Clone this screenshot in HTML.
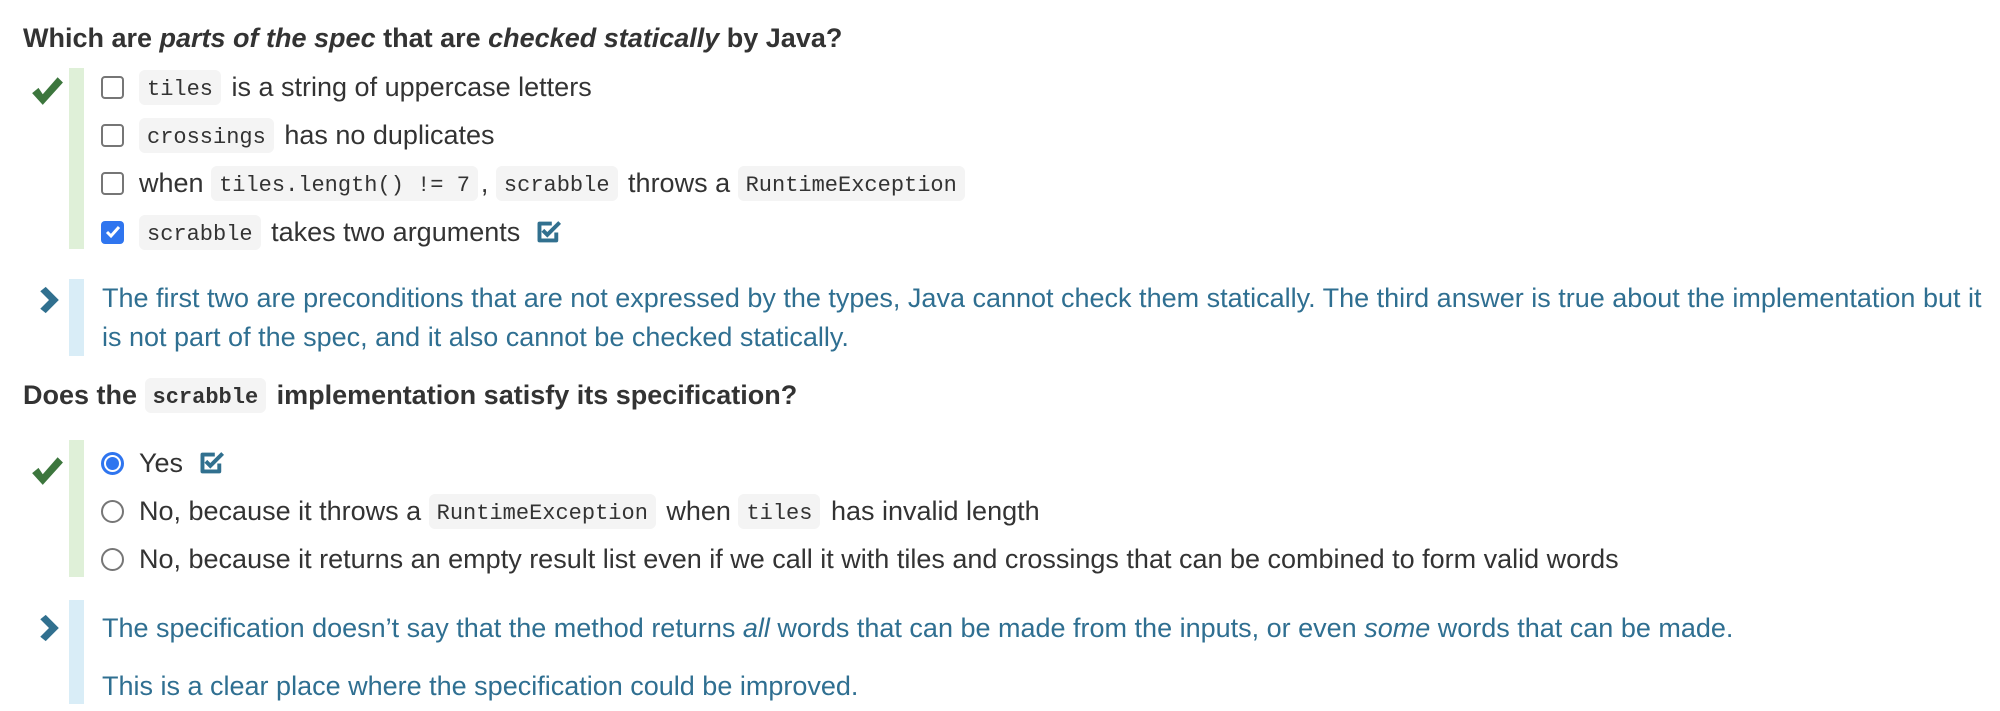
<!DOCTYPE html>
<html><head><meta charset="utf-8"><style>
body{margin:0;width:2000px;height:711px;background:#fff;position:relative;overflow:hidden;font-family:"Liberation Sans",Arial,sans-serif;font-size:27px;color:#333}
.row{position:absolute;left:0;height:40px;display:flex;align-items:center;white-space:nowrap}
code{display:inline-block;font-family:"Liberation Mono",monospace;font-size:22px;line-height:23px;background:#f4f4f4;border-radius:6px;padding:8px 8px 4px;margin:0 3px 0 0;color:#333}
.bar{position:absolute;left:69px;width:15px}
.g{background:#dff0d8}.b{background:#d9edf7}
.cb{width:19px;height:19px;border:2px solid #767676;border-radius:4px;box-sizing:content-box;margin-left:101px;margin-right:15px;flex:none}
.cbon{width:23px;height:23px;background:#2f75ef;border-radius:4px;margin-left:101px;margin-right:15px;display:flex;align-items:center;justify-content:center;flex:none}
.rd{width:19px;height:19px;border:2px solid #767676;border-radius:50%;margin-left:101px;margin-right:15px;flex:none}
.rdon{width:17px;height:17px;border:3px solid #2f75ef;border-radius:50%;margin-left:101px;margin-right:15px;flex:none;display:flex;align-items:center;justify-content:center}
.rdon i{width:13px;height:13px;border-radius:50%;background:#2f75ef;display:block}
.exp{color:#2f6f91}
.ic{position:absolute}
</style></head><body>
<div class="row" style="top:18px;left:23px;font-weight:bold">Which are&nbsp;<i>parts of the spec</i>&nbsp;that are&nbsp;<i>checked statically</i>&nbsp;by Java?</div>

<svg class="ic" style="left:30px;top:75px" width="34" height="32" viewBox="0 0 32 30"><path d="M2 17 L8 12 L12 18 L26 2 L31 7 L12 28 Z" fill="#3c763d"/></svg>
<div class="bar g" style="top:68px;height:181px"></div>

<div class="row" style="top:67px"><span class="cb"></span><code>tiles</code>&nbsp;is a string of uppercase letters</div>
<div class="row" style="top:115px"><span class="cb"></span><code>crossings</code>&nbsp;has no duplicates</div>
<div class="row" style="top:163px"><span class="cb"></span>when&nbsp;<code>tiles.length() != 7</code>,&nbsp;<code>scrabble</code>&nbsp;throws a&nbsp;<code>RuntimeException</code></div>
<div class="row" style="top:212px"><span class="cbon"><svg width="16" height="14" viewBox="0 0 16 14"><path d="M2 7 L6 11 L14 2" stroke="#fff" stroke-width="3" fill="none"/></svg></span><code>scrabble</code>&nbsp;takes two arguments&nbsp;&nbsp;<svg width="28" height="28" viewBox="0 0 25 25"><path d="M19 13 V20 H4 V5 H15" stroke="#31708f" stroke-width="3.5" fill="none" stroke-linejoin="round"/><path d="M7 11 L11 15 L22 4" stroke="#31708f" stroke-width="3.5" fill="none"/></svg></div>

<svg class="ic" style="left:37px;top:286px" width="24" height="28" viewBox="0 0 22 24"><path d="M3 4 L8 0 L20 12 L8 24 L3 20 L11 12 Z" fill="#31708f"/></svg>
<div class="bar b" style="top:279px;height:77px"></div>
<div class="row exp" style="top:278px;left:102px">The first two are preconditions that are not expressed by the types, Java cannot check them statically. The third answer is true about the implementation but it</div>
<div class="row exp" style="top:317px;left:102px">is not part of the spec, and it also cannot be checked statically.</div>

<div class="row" style="top:375px;left:23px;font-weight:bold">Does the&nbsp;<code style="font-weight:bold">scrabble</code>&nbsp;implementation satisfy its specification?</div>

<svg class="ic" style="left:30px;top:455px" width="34" height="32" viewBox="0 0 32 30"><path d="M2 17 L8 12 L12 18 L26 2 L31 7 L12 28 Z" fill="#3c763d"/></svg>
<div class="bar g" style="top:440px;height:137px"></div>
<div class="row" style="top:443px"><span class="rdon"><i></i></span>Yes&nbsp;&nbsp;<svg width="28" height="28" viewBox="0 0 25 25"><path d="M19 13 V20 H4 V5 H15" stroke="#31708f" stroke-width="3.5" fill="none" stroke-linejoin="round"/><path d="M7 11 L11 15 L22 4" stroke="#31708f" stroke-width="3.5" fill="none"/></svg></div>
<div class="row" style="top:491px"><span class="rd"></span>No, because it throws a&nbsp;<code>RuntimeException</code>&nbsp;when&nbsp;<code>tiles</code>&nbsp;has invalid length</div>
<div class="row" style="top:539px"><span class="rd"></span>No, because it returns an empty result list even if we call it with tiles and crossings that can be combined to form valid words</div>

<svg class="ic" style="left:37px;top:614px" width="24" height="28" viewBox="0 0 22 24"><path d="M3 4 L8 0 L20 12 L8 24 L3 20 L11 12 Z" fill="#31708f"/></svg>
<div class="bar b" style="top:600px;height:104px"></div>
<div class="row exp" style="top:608px;left:102px">The specification doesn’t say that the method returns&nbsp;<i>all</i>&nbsp;words that can be made from the inputs, or even&nbsp;<i>some</i>&nbsp;words that can be made.</div>
<div class="row exp" style="top:666px;left:102px">This is a clear place where the specification could be improved.</div>
</body></html>
